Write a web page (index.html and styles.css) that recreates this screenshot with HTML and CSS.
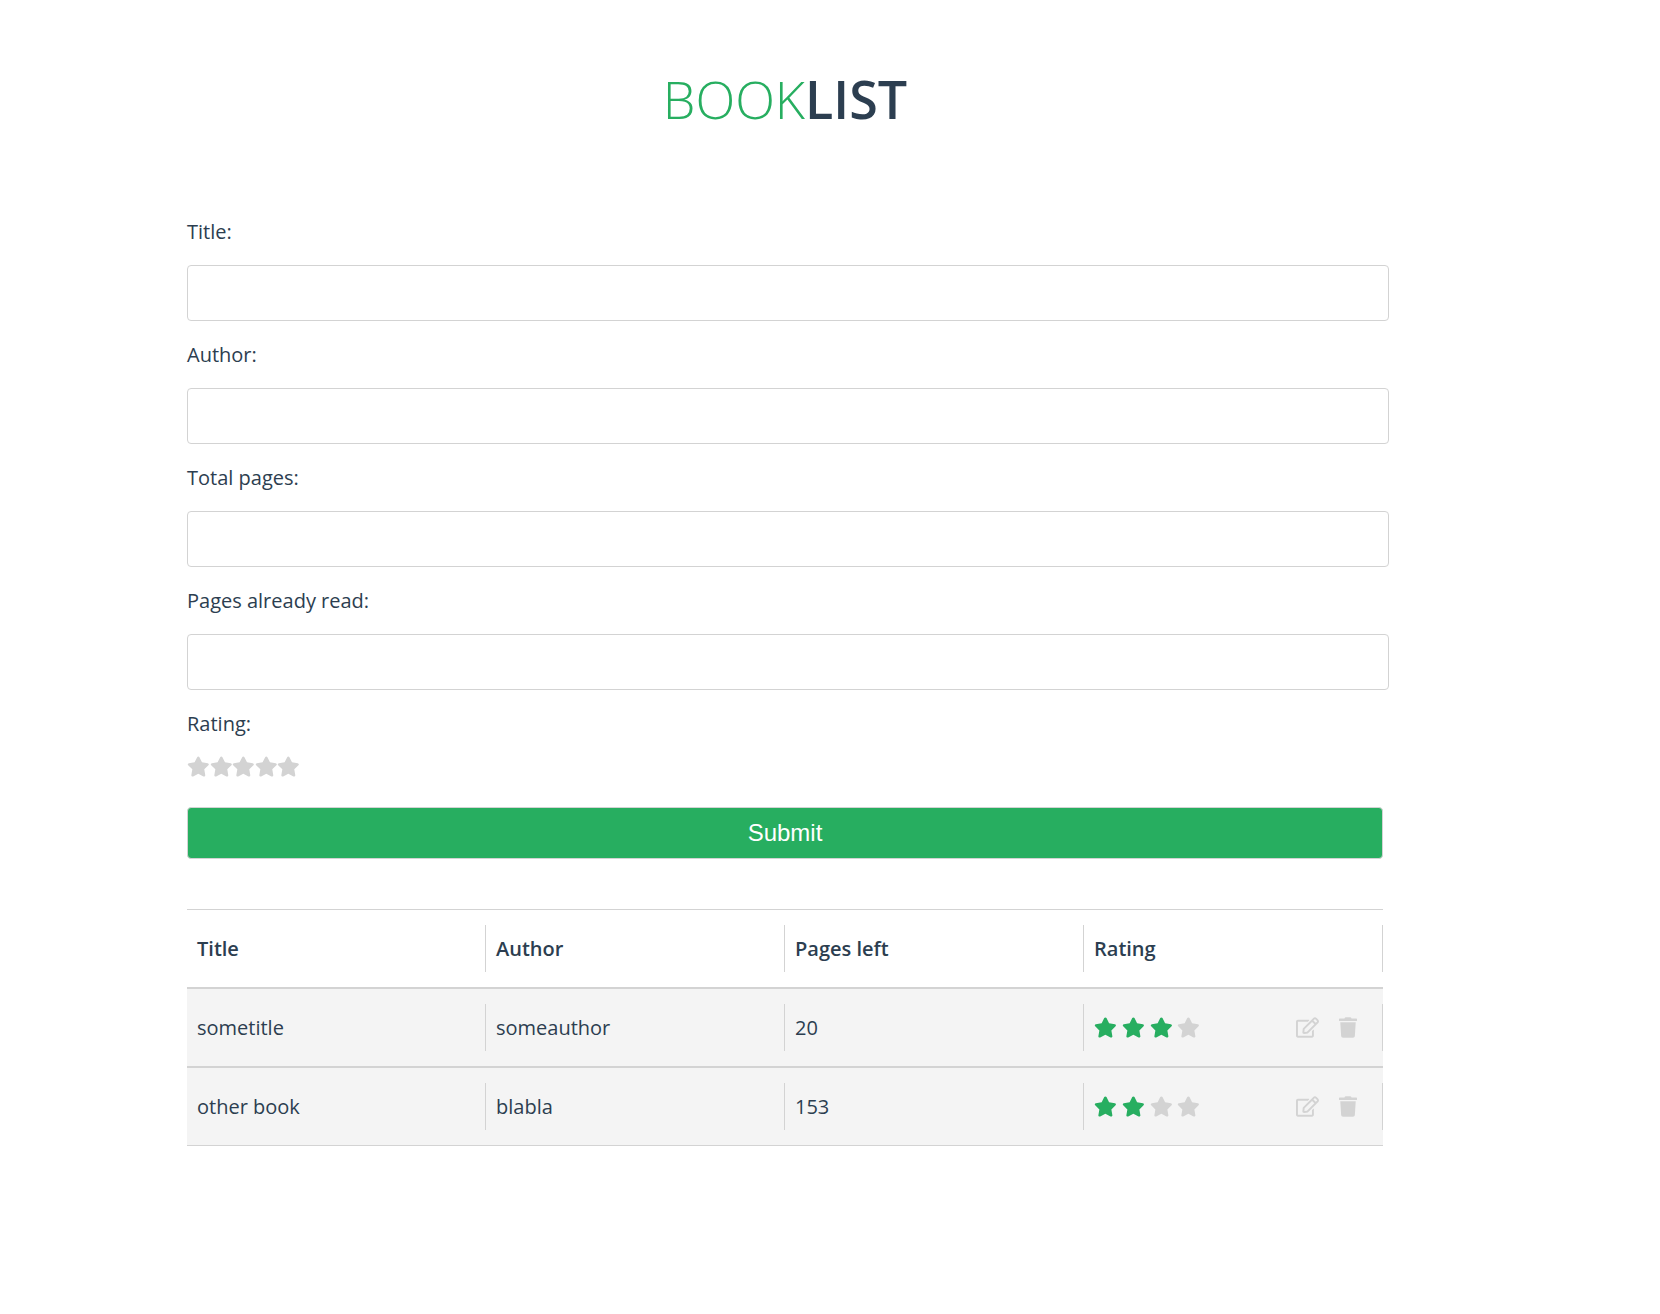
FILE: index.html
```html
<!DOCTYPE html>
<html lang="en">
<head>
<meta charset="utf-8">
<meta name="viewport" content="width=device-width, initial-scale=1">
<title>BookList</title>
<link rel="stylesheet" href="styles.css">
</head>
<body>
<svg class="sprite" aria-hidden="true">
  <symbol id="star" viewBox="0 0 576 512"><path d="M259.3 17.8L194 150.2 47.9 171.5c-26.2 3.8-36.7 36.1-17.7 54.6l105.7 103-25 145.5c-4.5 26.3 23.2 46 46.4 33.7L288 439.6l130.7 68.7c23.2 12.2 50.9-7.4 46.4-33.7l-25-145.5 105.7-103c19-18.5 8.5-50.8-17.7-54.6L382 150.2 316.7 17.8c-11.7-23.6-45.6-23.9-57.4 0z"/></symbol>
  <symbol id="edit" viewBox="0 0 576 512"><path d="M402.3 344.9l32-32c5-5 13.7-1.5 13.7 5.7V464c0 26.5-21.5 48-48 48H48c-26.5 0-48-21.5-48-48V112c0-26.5 21.5-48 48-48h273.5c7.1 0 10.7 8.6 5.7 13.7l-32 32c-1.5 1.5-3.5 2.3-5.7 2.3H48v352h352V350.5c0-2.1.8-4.1 2.3-5.6zm156.6-201.8L296.3 405.7l-90.4 10c-26.2 2.9-48.5-19.2-45.6-45.6l10-90.4L432.9 17.1c22.9-22.9 59.9-22.9 82.7 0l43.2 43.2c22.9 22.9 22.9 60 .1 82.8zM460.1 174L402 115.9 216.2 301.8l-7.3 65.3 65.3-7.3L460.1 174zm64.8-79.7l-43.2-43.2c-4.1-4.1-10.8-4.1-14.8 0L436 82l58.1 58.1 30.9-30.9c4-4.2 4-10.8-.1-14.9z"/></symbol>
  <symbol id="trash" viewBox="0 0 448 512"><path d="M432 32H312l-9.4-18.7A24 24 0 0 0 281.1 0H166.8a23.72 23.72 0 0 0-21.4 13.3L136 32H16A16 16 0 0 0 0 48v32a16 16 0 0 0 16 16h416a16 16 0 0 0 16-16V48a16 16 0 0 0-16-16zM53.2 467a48 48 0 0 0 47.9 45h245.8a48 48 0 0 0 47.9-45L416 128H32z"/></symbol>
</svg>
<main class="container">
  <h1 class="logo"><span class="logo-light">BOOK</span>LIST</h1>

  <form class="book-form">
    <label class="label" for="title">Title:</label>
    <input class="field" type="text" id="title">
    <label class="label" for="author">Author:</label>
    <input class="field" type="text" id="author">
    <label class="label" for="total">Total pages:</label>
    <input class="field" type="text" id="total">
    <label class="label" for="read">Pages already read:</label>
    <input class="field" type="text" id="read">
    <fieldset class="rating">
      <legend class="label">Rating:</legend>
      <div class="rating-stars">
        <label class="rating-option"><input type="radio" name="rating" value="1" aria-label="1 star"><svg class="icon"><use href="#star"/></svg></label>
        <label class="rating-option"><input type="radio" name="rating" value="2" aria-label="2 stars"><svg class="icon"><use href="#star"/></svg></label>
        <label class="rating-option"><input type="radio" name="rating" value="3" aria-label="3 stars"><svg class="icon"><use href="#star"/></svg></label>
        <label class="rating-option"><input type="radio" name="rating" value="4" aria-label="4 stars"><svg class="icon"><use href="#star"/></svg></label>
        <label class="rating-option"><input type="radio" name="rating" value="5" aria-label="5 stars"><svg class="icon"><use href="#star"/></svg></label>
      </div>
    </fieldset>
    <button class="submit" type="submit">Submit</button>
  </form>

  <table class="books">
    <thead>
      <tr>
        <th scope="col"><div class="cell">Title</div></th>
        <th scope="col"><div class="cell">Author</div></th>
        <th scope="col"><div class="cell">Pages left</div></th>
        <th scope="col"><div class="cell">Rating</div></th>
      </tr>
    </thead>
    <tbody>
      <tr>
        <td><div class="cell">sometitle</div></td>
        <td><div class="cell">someauthor</div></td>
        <td><div class="cell">20</div></td>
        <td>
          <div class="cell cell-rating">
            <div class="stars" role="img" aria-label="3 of 4 stars">
              <svg class="icon icon-on"><use href="#star"/></svg>
              <svg class="icon icon-on"><use href="#star"/></svg>
              <svg class="icon icon-on"><use href="#star"/></svg>
              <svg class="icon"><use href="#star"/></svg>
            </div>
            <div class="actions">
              <button class="action" type="button" aria-label="Edit"><svg class="icon"><use href="#edit"/></svg></button>
              <button class="action action-trash" type="button" aria-label="Delete"><svg class="icon"><use href="#trash"/></svg></button>
            </div>
          </div>
        </td>
      </tr>
      <tr>
        <td><div class="cell">other book</div></td>
        <td><div class="cell">blabla</div></td>
        <td><div class="cell">153</div></td>
        <td>
          <div class="cell cell-rating">
            <div class="stars" role="img" aria-label="2 of 4 stars">
              <svg class="icon icon-on"><use href="#star"/></svg>
              <svg class="icon icon-on"><use href="#star"/></svg>
              <svg class="icon"><use href="#star"/></svg>
              <svg class="icon"><use href="#star"/></svg>
            </div>
            <div class="actions">
              <button class="action" type="button" aria-label="Edit"><svg class="icon"><use href="#edit"/></svg></button>
              <button class="action action-trash" type="button" aria-label="Delete"><svg class="icon"><use href="#trash"/></svg></button>
            </div>
          </div>
        </td>
      </tr>
    </tbody>
  </table>
</main>
</body>
</html>
```
FILE: styles.css
```css
* {
  box-sizing: border-box;
}

body {
  margin: 0;
  padding: 63px 90px 80px 0;
  background: #fff;
  color: #2c3e50;
  font: 400 20px/27px "Open Sans", sans-serif;
}

.sprite {
  display: none;
}

.container {
  max-width: 1196px;
  margin: 0 auto;
}

.logo {
  margin: 0 0 84px;
  font-size: 52px;
  font-weight: 600;
  line-height: 71px;
  text-align: center;
}

.logo-light {
  color: #27ae60;
  font-weight: 300;
}

.label {
  display: block;
  padding: 0;
}

/* Fields reach slightly past the column on the right. */
.field {
  display: block;
  width: calc(100% + 6px);
  height: 56px;
  margin: 20px 0;
  padding: 10px;
  border: 1px solid lightgray;
  border-radius: 4px;
  font: inherit;
  color: inherit;
}

.rating {
  margin: 0 0 30px;
  padding: 0;
  border: 0;
}

.rating-stars {
  display: grid;
  grid-template-columns: repeat(5, 1fr);
  width: 113px;
  margin-top: 19px;
}

.rating-option {
  display: block;
  position: relative;
  height: 21px;
  cursor: pointer;
}

.rating-option input {
  position: absolute;
  inset: 0;
  margin: 0;
  opacity: 0;
}

.icon {
  display: block;
  width: 100%;
  height: 21px;
  fill: lightgray;
}

.icon-on {
  fill: #27ae60;
}

.submit {
  display: block;
  width: 100%;
  height: 52px;
  margin-bottom: 50px;
  padding: 0;
  border: 1px solid lightgray;
  border-radius: 4px;
  background: #27ae60;
  color: #fff;
  font: 24px "Liberation Sans", Arial, sans-serif;
}

.books {
  width: 100%;
  table-layout: fixed;
  border-collapse: separate;
  border-spacing: 0;
}

.books th,
.books td {
  padding: 15px 0;
  border: solid lightgray;
  border-width: 1px 0;
  text-align: left;
  font-weight: 400;
}

.books th {
  font-weight: 600;
}

.books td {
  background: #f4f4f4;
}

.cell {
  padding: 10px;
  border-right: 1px solid lightgray;
}

.cell-rating {
  display: flex;
  align-items: center;
  justify-content: space-between;
  height: 47px;
  padding-right: 25px;
}

.stars {
  display: grid;
  grid-template-columns: repeat(4, 1fr);
  gap: 5px;
  width: 106px;
}

.actions {
  display: flex;
  gap: 20px;
}

.action {
  width: 23px;
  padding: 0;
  border: 0;
  background: none;
  cursor: pointer;
}

.action-trash {
  width: 18px;
}
```
